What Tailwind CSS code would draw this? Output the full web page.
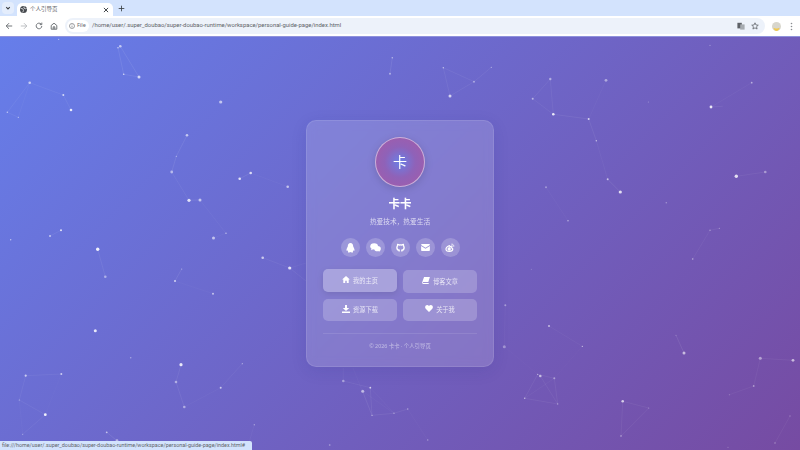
<!DOCTYPE html>
<html lang="zh-CN">
<head>
  <meta charset="UTF-8" />
  <title>个人引导页</title>
  <script src="https://cdn.jsdelivr.net/npm/@tailwindcss/browser@4"></script>
</head>
<body class="w-[800px] h-[450px] overflow-hidden flex flex-col bg-white font-['Noto_Sans','Noto_Sans_CJK_SC',sans-serif]">

  <!-- tab strip -->
  <div class="h-[16px] shrink-0 bg-[#d3e3fd] flex items-end pl-[2px]">
    <div class="w-[12px] h-[12px] mb-[2px] rounded-[4px] bg-[#e4edfc] flex items-center justify-center">
      <svg width="6" height="6" viewBox="0 0 10 10" fill="none" stroke="#3c4043" stroke-width="1.8"><path d="M2 3.5l3 3 3-3"/></svg>
    </div>
    <div class="w-[96px] h-[13px] ml-[3px] bg-white rounded-t-[5px] flex items-center pl-[3px] pr-[4px]">
      <svg width="7" height="7" viewBox="0 0 10 10"><circle cx="5" cy="5" r="5" fill="#45494e"/><path d="M1 3.5l3 .5 1 2-1 3M6 .5L5.5 3l2 1 2-.5" fill="none" stroke="#fff" stroke-width="1"/></svg>
      <span class="ml-[3px] text-[5.5px] leading-none text-[#5f6368]">个人引导页</span>
      <svg class="ml-auto" width="6" height="6" viewBox="0 0 10 10" stroke="#3c4043" stroke-width="1.6"><path d="M1.5 1.5l7 7M8.5 1.5l-7 7"/></svg>
    </div>
    <svg class="ml-[5px] mb-[4px]" width="7" height="7" viewBox="0 0 10 10" stroke="#3c4043" stroke-width="1.2"><path d="M5 1v8M1 5h8"/></svg>
  </div>

  <!-- toolbar -->
  <div class="h-[20px] shrink-0 bg-white flex items-center pl-[5px] pr-[5px]">
    <svg width="8" height="8" viewBox="0 0 10 10" fill="none" stroke="#5f6368" stroke-width="1.1"><path d="M9 5H1.5M5 1.5L1.5 5 5 8.5"/></svg>
    <svg class="ml-[7px]" width="8" height="8" viewBox="0 0 10 10" fill="none" stroke="#b4b7bb" stroke-width="1.1"><path d="M1 5h7.5M5 1.5L8.5 5 5 8.5"/></svg>
    <svg class="ml-[7px]" width="8" height="8" viewBox="0 0 10 10" fill="none" stroke="#5f6368" stroke-width="1.1"><path d="M8.5 5A3.5 3.5 0 1 1 7.500 2.5M8.5.8v2.500H6"/></svg>
    <svg class="ml-[7px]" width="8" height="8" viewBox="0 0 10 10" fill="none" stroke="#5f6368" stroke-width="1.1"><path d="M1.5 9V4.300L5 1.500l3.500 2.800V9zM4 9V6h2v3"/></svg>
    <div class="ml-[7px] w-[700px] h-[16px] bg-[#edf2fa] rounded-full flex items-center pl-[2px] pr-[6px]">
      <div class="w-[22px] h-[12px] bg-white rounded-full flex items-center pl-[2px] gap-[2px]">
        <svg width="6" height="6" viewBox="0 0 10 10" fill="none" stroke="#5f6368" stroke-width="1"><circle cx="5" cy="5" r="4.2"/><path d="M5 4.5v3M5 2.5v1"/></svg>
        <span class="text-[5.5px] leading-none text-[#5f6368]">File</span>
      </div>
      <span class="ml-[3px] text-[5.9px] leading-none text-[#5f6368] font-['Roboto',sans-serif] whitespace-nowrap">/home/user/.super_doubao/super-doubao-runtime/workspace/personal-guide-page/index.html</span>
      <svg class="ml-auto" width="8" height="8" viewBox="0 0 10 10"><rect x="0.5" y="1" width="5.500" height="7" fill="#5f6368"/><rect x="4" y="3" width="5.500" height="6.500" fill="#a6abb0"/></svg>
      <svg class="ml-[6px]" width="8" height="8" viewBox="0 0 10 10" fill="none" stroke="#5f6368" stroke-width="1"><path d="M5 1l1.200 2.700 2.900.3-2.200 1.900.7 2.900L5 7.300 2.400 8.800l.7-2.900L.9 4l2.900-.3z"/></svg>
    </div>
    <svg class="ml-[7px]" width="9" height="9" viewBox="0 0 10 10"><circle cx="5" cy="5" r="5" fill="#d8d6cc"/><path d="M1.500 6.500C3 7.500 7 7.500 8.500 6.500 8 8.800 6.500 10 5 10S2 8.800 1.500 6.500z" fill="#f2c94c"/></svg>
    <svg class="ml-[9px]" width="3" height="9" viewBox="0 0 3 9" fill="#8a8d91"><circle cx="1.5" cy="1.5" r="0.8"/><circle cx="1.5" cy="4.5" r="0.8"/><circle cx="1.5" cy="7.5" r="0.8"/></svg>
  </div>

  <!-- page -->
  <main class="relative flex-1 flex items-center justify-center border-t border-[#8f92dc] bg-[linear-gradient(135deg,#667eea_0%,#764ba2_100%)]">
    <svg id="particles" class="absolute inset-0 blur-[0.3px]" width="800" height="414" viewBox="0 36 800 414"></svg>

    <div class="relative w-[188px] h-[247px] rounded-[10px] border border-white/10 bg-white/15 backdrop-blur-[5px] shadow-[0_4px_16px_rgba(31,38,135,0.12)] px-[16px] pt-[16px] flex flex-col items-center">
      <div class="w-[50px] h-[50px] shrink-0 rounded-full border-[1.5px] border-white/50 bg-[radial-gradient(circle,#6a7fe6_0%,#8f62b8_45%,#a75aa6_100%)] shadow-[0_2px_8px_rgba(0,0,0,0.15)] flex items-center justify-center text-white text-[14px] leading-none">卡</div>
      <h1 class="mt-[10px] text-[11.5px] leading-[14px] font-bold text-white">卡卡</h1>
      <p class="mt-[5.5px] text-[6.7px] leading-[10px] text-white/70">热爱技术，热爱生活</p>

      <div class="mt-[11.5px] flex gap-[6px] text-white">
        <a class="w-[19px] h-[19px] rounded-full bg-white/20 flex items-center justify-center">
          <svg width="9" height="10" viewBox="0 0 10 11" fill="#fff"><path d="M5 0C3 0 2 1.500 2 3.500c0 .8-1.500 2.500-1.500 4.200 0 1 .5 1 1.200.2.2.7.5 1.100.8 1.400C1.800 9.800 2 10.500 3.500 10.500c.8 0 1.200-.3 1.500-.5.3.2.7.5 1.500.5 1.500 0 1.700-.7 1-1.200.3-.3.6-.7.800-1.400.7.800 1.200.8 1.200-.2C9.500 6 8 4.300 8 3.500 8 1.500 7 0 5 0z"/></svg>
        </a>
        <a class="w-[19px] h-[19px] rounded-full bg-white/20 flex items-center justify-center">
          <svg width="11" height="9" viewBox="0 0 12 10" fill="#fff"><ellipse cx="4.5" cy="3.7" rx="4.3" ry="3.5"/><ellipse cx="8.3" cy="6.3" rx="3.6" ry="3"/><path d="M1.500 6l-.3 2 2-1zM9.500 8.500l1.300 1.200-.2-2z"/></svg>
        </a>
        <a class="w-[19px] h-[19px] rounded-full bg-white/20 flex items-center justify-center">
          <svg width="9" height="9" viewBox="0 0 10 10" fill="none" stroke="#fff" stroke-width="1.5"><path d="M3.500 9.500V8C2 8 1 7 1 5c0-.8.300-1.300.7-1.800-.1-.6 0-1.200.2-1.700.6 0 1.200.3 1.700.7.900-.2 1.900-.2 2.800 0 .5-.4 1.100-.7 1.700-.7.200.5.300 1.100.2 1.700.4.500.7 1 .7 1.800 0 2-1 3-2.500 3v1.500"/></svg>
        </a>
        <a class="w-[19px] h-[19px] rounded-full bg-white/20 flex items-center justify-center">
          <svg width="9" height="7" viewBox="0 0 10 8" fill="#fff"><path d="M.8 0h8.400c.4 0 .8.300.8.800v.2L5 4.300 0 1V.8C0 .3.400 0 .8 0zM0 2.200l5 3.300 5-3.300v5c0 .5-.4.800-.8.800H.8C.4 8 0 7.700 0 7.200z"/></svg>
        </a>
        <a class="w-[19px] h-[19px] rounded-full bg-white/20 flex items-center justify-center">
          <svg width="10" height="9" viewBox="0 0 11 10" fill="none" stroke="#fff" stroke-width="1.3"><path d="M4.500 3C2.500 3.800 1 5.200 1 6.600 1 8.300 3 9.300 4.800 9.300c2 0 3.800-1.200 3.800-2.500 0-1-1-1.300-1.300-1.400.4-1.100-.1-1.800-1.800-1.100 .1-.8-.1-1.200-1-1.300z"/><circle cx="4.6" cy="6.7" r="1.2" fill="#fff"/><path d="M7 1.300c1.600-.3 3 1 2.700 2.800M7.200 2.800c.8-.1 1.200.4 1.100 1.100" stroke-width="0.9"/></svg>
        </a>
      </div>

      <div class="mt-[13px] w-full grid grid-cols-2 gap-x-[6px] gap-y-[6px] text-[6.25px] text-white/75">
        <a class="h-[22.5px] -translate-y-px rounded-[5px] bg-white/30 shadow-[0_2px_6px_rgba(0,0,0,0.1)] flex items-center justify-center gap-[3px]">
          <svg class="-mt-[2px]" width="8" height="7" viewBox="0 0 10 9" fill="#fff"><path d="M5 0L0 4.500h1.500V9h2.500V6h2v3h2.500V4.500H10z"/></svg>
          <span>我的主页</span>
        </a>
        <a class="h-[22.5px] rounded-[5px] bg-white/20 flex items-center justify-center gap-[3px]">
          <svg class="-mt-[2px]" width="8" height="7" viewBox="0 0 10 9" fill="#fff"><path d="M2.500 0H10L8 6.500H1.500C1 6.500.8 7 1 7.300c.2.300.5.400.8.400H8.500V9H1.800C.7 9 0 8 0 7z"/></svg>
          <span>博客文章</span>
        </a>
        <a class="h-[22.5px] rounded-[5px] bg-white/20 flex items-center justify-center gap-[3px]">
          <svg class="-mt-[2px]" width="8" height="8" viewBox="0 0 10 10" fill="#fff"><path d="M3.800 0h2.400v3.800H9L5 7.500 1 3.800h2.800zM0 8h10v2H0z"/></svg>
          <span>资源下载</span>
        </a>
        <a class="h-[22.5px] rounded-[5px] bg-white/20 flex items-center justify-center gap-[3px]">
          <svg class="-mt-[2px]" width="8" height="7" viewBox="0 0 10 9" fill="#fff"><path d="M5 9L.8 4.800C-.3 3.600-.2 1.800.9.800 2-.3 3.800-.2 5 1.300 6.200-.2 8-.3 9.100.8c1.100 1 1.200 2.800.1 4z"/></svg>
          <span>关于我</span>
        </a>
      </div>

      <div class="mt-[12px] w-full border-t border-white/10"></div>
      <p class="mt-[8px] text-[5.4px] leading-[8px] text-white/50">© 2026 卡卡 · 个人引导页</p>
    </div>

    <div class="absolute left-0 bottom-0 h-[9px] w-[252px] bg-[#d3e3fd] rounded-tr-[2px] pl-[2px] flex items-center text-[5.4px] leading-none text-[#5f6368] font-['Roboto',sans-serif] whitespace-nowrap">file:///home/user/.super_doubao/super-doubao-runtime/workspace/personal-guide-page/index.html#</div>
  </main>

  <script>
    // [x, y, radius, opacity]
    const dots = [
      [58.7,38.3,.6,.6],[120.3,45.3,1.3,.6],[118,46.7,.8,.6],[123.7,73.3,.8,.7],[139,76,1.5,.7],
      [29.7,81.7,1.3,.6],[63.3,94,1,.7],[71,109,1.3,.85],[7.3,111.3,.7,.6],[18.3,116.3,.6,.6],
      [220.7,101,1.6,.6],[187,134.3,1.3,.6],[176.3,155.3,.6,.5],[171.7,171,1.4,.5],[189,199.3,1.6,.8],
      [200,199,1.5,.6],[239.7,177.7,1.3,.8],[250.7,172,1.3,.75],[287.7,185.7,1.3,.6],[61,229.3,1,.8],
      [50,235,1,.6],[226,232.3,.7,.6],[213.5,237,1.5,.6],[10.7,238.7,.7,.6],[97.7,248.3,1.7,.9],
      [105.3,275.7,1.3,.45],[181.7,268,.6,.5],[175,280,1,.7],[213,292.7,1,.6],[262.7,256.7,1.3,.65],
      [289.7,267,1.6,.8],[95.3,329.7,1.5,.85],[130.7,356.7,.8,.4],[181,363.7,1.6,.85],[176,381,1.3,.45],
      [184.3,406,1.3,.45],[220.7,386.7,1,.65],[242.3,362.7,.6,.5],[25.7,374.7,1.1,.65],[61.3,373,1,.65],
      [19.3,399,.6,.5],[45.3,413.7,1.4,.9],[22.7,433.3,.6,.4],[106.7,431.3,.9,.6],[117,439.7,1.4,.5],
      [254.3,423.7,.7,.4],
      [392.3,56.7,.8,.5],[390,72.7,1,.45],[443.3,66.7,.7,.6],[491.3,66.3,.6,.5],[474,80.7,1,.4],[450,95,1.5,.7],
      [710,44.3,.6,.4],[550.3,78,1.2,.45],[606,79.3,1.4,.45],[532.7,97.7,1,.5],[553.3,113.3,1.3,.85],
      [588.7,118,1,.7],[648.3,101,.5,.4],[751.7,81.7,.9,.5],[711,106,1.4,.85],[596.3,139.7,.7,.6],
      [607.7,178.3,1,.6],[620.3,191,1.6,.8],[736.3,175.3,1.7,.8],[765.3,171,1.3,.4],[546,186.3,1,.35],
      [568,219.7,.8,.5],[666.3,201.7,.8,.35],[710,229.3,.7,.4],[719.3,227.3,.5,.5],[692.7,258,.8,.5],
      [531.3,268.3,.5,.3],[505.3,304.3,1,.4],[504.3,345.7,1.5,.35],[549,325,1.1,.55],[582.3,345.3,.6,.7],
      [676,334.3,.5,.35],[684,352,1.5,.6],[760.3,357.3,1.5,.45],[793,359.3,1.4,.6],[753.7,385,.9,.4],
      [729.3,393.7,.5,.35],[537.7,373.3,.6,.6],[540.3,375,1.3,.6],[554.3,377.3,1,.4],[524.7,397.3,.7,.6],
      [557.7,403,.7,.4],[622.7,400.3,1.3,.7],[648.7,407,.6,.35],[621,435,.8,.5],[790,415,.7,.3],
      [775,442,.7,.4],[728,446.3,.5,.35],
      [343.3,380,1.3,.4],[362.7,390.3,1.5,.55],[370.3,386.7,.9,.7],[372,414.3,.6,.6],[394,412.3,.7,.4],
      [407.7,408,.8,.4],[427.7,439,.8,.35],[329.7,444,.9,.3]
    ];
    // [opacity, x1, y1, x2, y2, ...]
    const lines = [
      [.3,120.3,45.3,139,76,123.7,73.3,118,46.7],
      [.22,18.3,116.3,7.3,111.3,29.7,81.7,63.3,94],[.25,63.3,94,71,109],[.15,29.7,81.7,18.3,116.3],
      [.3,187,134.3,176.3,155.3,171.7,171],[.2,171.7,171,189,199.3],[.3,189,199.3,200,199],[.15,200,199,226,232.3],
      [.3,239.7,177.7,250.7,172],[.12,250.7,172,287.7,185.7],[.25,61,229.3,50,235],[.12,226,232.3,213.5,237],
      [.25,97.7,248.3,105.3,275.7],[.3,181.7,268,175,280],[.1,175,280,213,292.7],[.2,262.7,256.7,289.7,267],
      [.2,289.7,267,306,280],[.15,289.7,267,306,262],
      [.25,181,363.7,176,381,184.3,406],[.12,184.3,406,220.7,386.7],[.18,220.7,386.7,242.3,362.7],
      [.2,25.7,374.7,61.3,373],[.2,25.7,374.7,19.3,399,45.3,413.7,22.7,433.3],[.1,19.3,399,22.7,433.3],[.08,61.3,373,45.3,413.7],
      [.3,106.7,431.3,117,439.7],[.15,254.3,423.7,248,445],
      [.3,392.3,56.7,390,72.7],[.22,443.3,66.7,474,80.7,491.3,66.3],[.22,443.3,66.7,450,95,474,80.7],
      [.2,550.3,78,532.7,97.7,553.3,113.3,550.3,78],[.25,553.3,113.3,588.7,118,596.3,139.7],[.12,588.7,118,606,79.3],
      [.15,596.3,139.7,607.7,178.3],[.3,607.7,178.3,620.3,191],[.15,711,106,751.7,81.7],[.25,711,106,722.7,105.3],
      [.2,736.3,175.3,765.3,171],[.12,546,186.3,568,219.7],[.2,710,229.3,719.3,227.3],[.18,710,229.3,692.7,258],
      [.1,505.3,304.3,504.3,345.7],[.08,504.3,345.7,537.7,373.3],[.15,549,325,582.3,345.3],[.08,582.3,345.3,554.3,377.3],
      [.3,676,334.3,684,352],[.2,760.3,357.3,793,359.3],[.18,760.3,357.3,753.7,385,729.3,393.7],
      [.22,537.7,373.3,554.3,377.3,557.7,403,524.7,397.3,537.7,373.3],[.2,540.3,375,557.7,403],[.15,524.7,397.3,554.3,377.3],
      [.2,622.7,400.3,648.7,407,621,435,622.7,400.3],[.18,790,415,775,442],
      [.2,343.3,380,370.3,386.7],[.15,343.3,367,343.3,380],[.25,370.3,386.7,372,414.3,394,412.3,407.7,408],
      [.2,362.7,390.3,372,414.3],[.12,362.7,390.3,394,412.3],[.12,370.3,386.7,394,412.3],[.1,407.7,408,427.7,439],[.1,353,367,372,414.3]
    ];

    const svg = document.getElementById('particles');
    const ns = 'http://www.w3.org/2000/svg';

    lines.forEach(l => {
      const el = document.createElementNS(ns, 'polyline');
      el.setAttribute('points', l.slice(1).join(' '));
      el.setAttribute('fill', 'none');
      el.setAttribute('stroke', '#fff');
      el.setAttribute('stroke-width', '.5');
      el.setAttribute('stroke-opacity', l[0] * 0.55);
      svg.appendChild(el);
    });

    dots.forEach(d => {
      const el = document.createElementNS(ns, 'circle');
      el.setAttribute('cx', d[0]);
      el.setAttribute('cy', d[1]);
      el.setAttribute('r', d[2]);
      el.setAttribute('fill', '#fff');
      el.setAttribute('fill-opacity', d[3]);
      svg.appendChild(el);
    });
  </script>
</body>
</html>
